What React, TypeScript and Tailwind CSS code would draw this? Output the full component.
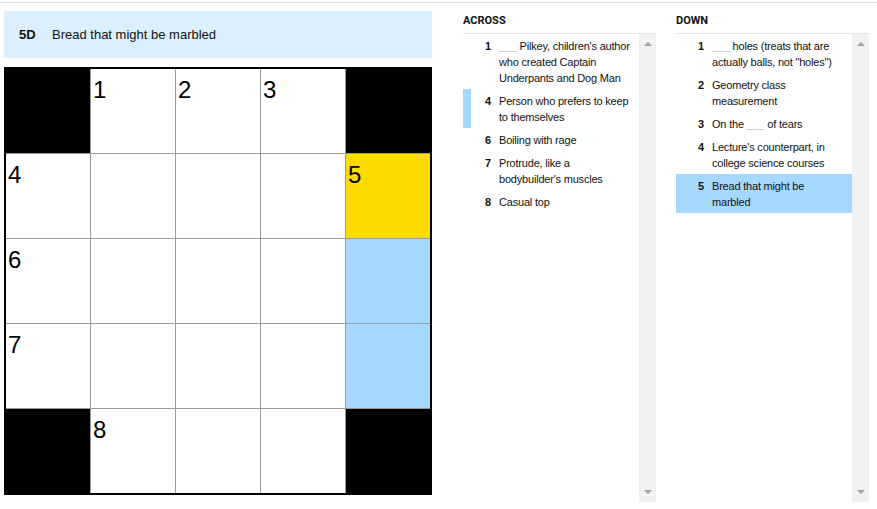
import React from 'react';

type Cell = { black?: boolean; num?: number; fill?: 'yellow' | 'blue' };

const grid: Cell[][] = [
  [{ black: true }, { num: 1 }, { num: 2 }, { num: 3 }, { black: true }],
  [{ num: 4 }, {}, {}, {}, { num: 5, fill: 'yellow' }],
  [{ num: 6 }, {}, {}, {}, { fill: 'blue' }],
  [{ num: 7 }, {}, {}, {}, { fill: 'blue' }],
  [{ black: true }, { num: 8 }, {}, {}, { black: true }],
];

type Clue = { n: number; text: React.ReactNode; mark?: 'bar' | 'fill' };

const Blank = () => <span className="text-[#c4c4c4]">___</span>;

const across: Clue[] = [
  { n: 1, text: <><Blank /> Pilkey, children's author who created Captain Underpants and Dog Man</> },
  { n: 4, text: 'Person who prefers to keep to themselves', mark: 'bar' },
  { n: 6, text: 'Boiling with rage' },
  { n: 7, text: "Protrude, like a bodybuilder's muscles" },
  { n: 8, text: 'Casual top' },
];

const down: Clue[] = [
  { n: 1, text: <><Blank /> holes (treats that are actually balls, not "holes")</> },
  { n: 2, text: 'Geometry class measurement' },
  { n: 3, text: <>On the <Blank /> of tears</> },
  { n: 4, text: "Lecture's counterpart, in college science courses" },
  { n: 5, text: 'Bread that might be marbled', mark: 'fill' },
];

const ClueList: React.FC<{ title: string; clues: Clue[] }> = ({ title, clues }) => (
  <div className="w-[193px] flex flex-col">
    <div className="pt-[12px] pb-[6px] text-[11px] leading-[12px] font-bold text-[#121212] border-b border-[#e6e6e6] font-['Roboto',sans-serif]">
      {title}
    </div>
    <div className="flex h-[468px]">
      <ul className="w-[176px]">
        {clues.map((c) => (
          <li
            key={c.n}
            className={`relative flex pl-[22px] pr-[8px] pt-[4px] pb-[3px] text-[11px] leading-[16px] tracking-[-0.2px] text-[#121212] ${
              c.mark === 'fill' ? 'bg-[#a7d8ff]' : ''
            }`}
          >
            {c.mark === 'bar' && <span className="absolute left-0 top-0 bottom-0 w-[8px] bg-[#a7d8ff]" />}
            <span className="w-[14px] shrink-0 font-bold">{c.n}</span>
            <span className="flex-1">{c.text}</span>
          </li>
        ))}
      </ul>
      <div className="w-[17px] bg-[#f1f1f1] flex flex-col items-center justify-between pt-[8px] pb-[8px]">
        <span className="w-0 h-0 border-x-[4px] border-x-transparent border-b-[4px] border-b-[#a3a3a3]" />
        <span className="w-0 h-0 border-x-[4px] border-x-transparent border-t-[4px] border-t-[#a3a3a3]" />
      </div>
    </div>
  </div>
);

export default function App() {
  return (
    <div className="w-[877px] h-[509px] bg-white pt-[2px] font-['Liberation_Sans',Arial,sans-serif] overflow-hidden">
      <div className="border-t border-[#dcdcdc] flex">
        {/* puzzle */}
        <div className="ml-[4px] w-[428px] pt-[8px]">
          <div className="h-[47px] bg-[#dcefff] flex items-center text-[13px] text-[#121212]">
            <span className="pl-[15px] w-[48px] font-bold">5D</span>
            <span>Bread that might be marbled</span>
          </div>
          <div className="mt-[9px] w-[428px] border-2 border-black bg-[#9a9a9a] grid grid-cols-5 gap-px">
            {grid.flat().map((cell, i) => (
              <div
                key={i}
                className={`h-[84px] pl-[2px] pt-[9px] text-[24px] leading-none text-black ${
                  cell.black
                    ? 'bg-black'
                    : cell.fill === 'yellow'
                    ? 'bg-[#ffda00]'
                    : cell.fill === 'blue'
                    ? 'bg-[#a7d8ff]'
                    : 'bg-white'
                }`}
              >
                {cell.num}
              </div>
            ))}
          </div>
        </div>
        {/* clues */}
        <div className="ml-[31px] flex gap-[20px]">
          <ClueList title="ACROSS" clues={across} />
          <ClueList title="DOWN" clues={down} />
        </div>
      </div>
    </div>
  );
}
